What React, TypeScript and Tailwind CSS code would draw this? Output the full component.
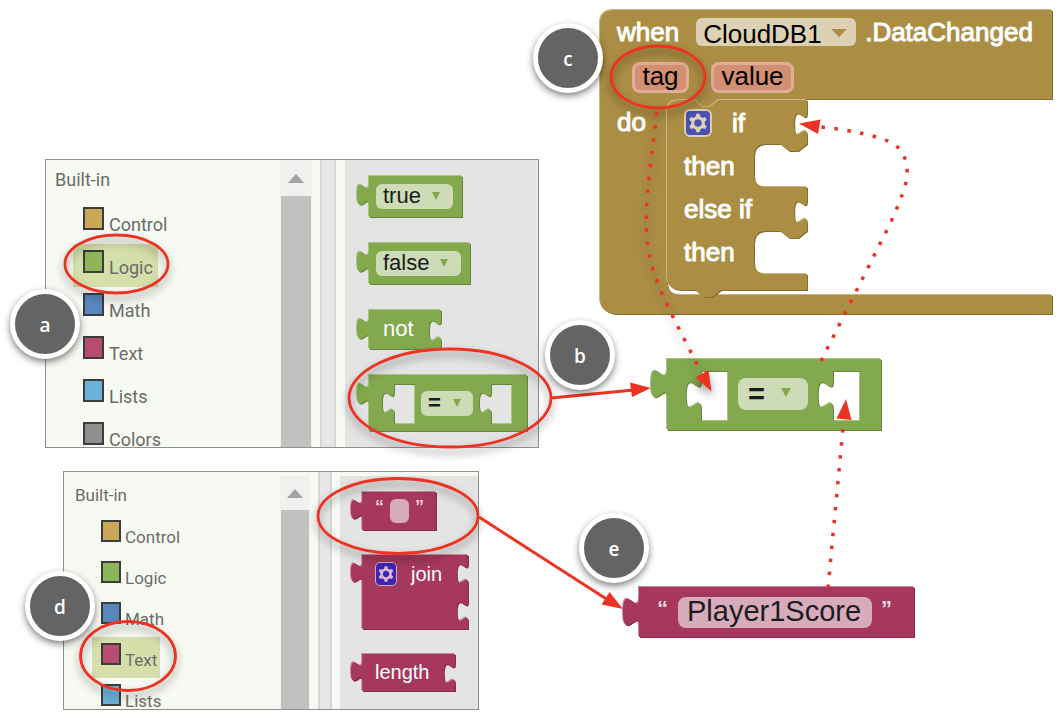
import type { ReactNode } from "react";

const GREEN = { base: "#83a94f", light: "#a9c482", dark: "#67863d" };
const PINK = { base: "#a5385c", light: "#c98aa1", dark: "#822d49" };
const GOLD = { base: "#ab8d44", light: "#c9b581", dark: "#846c35" };
type Tone = typeof GREEN;

// Puzzle tab drawn downwards, bulging to the left, at scale s.
const tab = (s: number) =>
  `v${5 * s}c0,${10 * s} ${-8 * s},${-8 * s} ${-8 * s},${7.5 * s}s${8 * s},${-2.5 * s} ${8 * s},${7.5 * s}`;

// The same tab traced upwards, used to close a clockwise outline.
const tabUp = (s: number) =>
  `c0,${-10 * s} ${-8 * s},${8 * s} ${-8 * s},${-7.5 * s}c0,${-15.5 * s} ${8 * s},${2.5 * s} ${8 * s},${-7.5 * s}`;

const body = (s: number, w: number, h: number, sockets: number[] = []) =>
  `M${8 * s},0H${w}` + sockets.map((y) => `V${y}${tab(s)}`).join("") + `V${h}H${8 * s}V${20 * s}${tabUp(s)}Z`;

const hole = (s: number, x: number, y: number, w: number, h: number) =>
  `M${x},${y}${tab(s)}V${y + h}H${x + w}V${y}Z`;

function Shape({ d, tone }: { d: string; tone: Tone }) {
  return (
    <svg className="absolute inset-0 h-full w-full overflow-visible" aria-hidden="true">
      <path d={d} fill={tone.light} fillRule="evenodd" transform="translate(-1,-1)" />
      <path d={d} fill={tone.dark} fillRule="evenodd" transform="translate(1,1)" />
      <path d={d} fill={tone.base} fillRule="evenodd" />
    </svg>
  );
}

function Block({ d, tone, className, children }: { d: string; tone: Tone; className: string; children?: ReactNode }) {
  return (
    <div className={`shrink-0 ${className}`}>
      <Shape d={d} tone={tone} />
      <div className="relative flex h-full w-full items-start">{children}</div>
    </div>
  );
}

function Dropdown({
  label,
  options,
  className,
  arrow,
  color,
}: {
  label: string;
  options: string[];
  className: string;
  arrow: string;
  color: string;
}) {
  return (
    <span className={`relative block ${className}`}>
      <select aria-label={label} className="block h-full w-full cursor-pointer appearance-none bg-transparent pb-[3px] pl-[7px] outline-none">
        {options.map((o) => (
          <option key={o}>{o}</option>
        ))}
      </select>
      <svg className={`pointer-events-none absolute ${arrow}`} viewBox="0 0 10 9" preserveAspectRatio="none" aria-hidden="true">
        <path d="M0,0H10L5,9Z" fill={color} />
      </svg>
    </span>
  );
}

function Gear({ className, stroke, fill }: { className: string; stroke: string; fill: string }) {
  return (
    <button aria-label="Edit block" className={`flex shrink-0 items-center justify-center ${className}`}>
      <svg viewBox="-11 -11 22 22" className="h-full w-full" aria-hidden="true">
        {[0, 60, 120, 180, 240, 300].map((a) => (
          <path key={a} d="M-2.4,-4.500L-1.500,-8.400H1.500L2.400,-4.500Z" fill={stroke} transform={`rotate(${a})`} />
        ))}
        <circle r="4.9" fill={fill} stroke={stroke} strokeWidth="2.8" />
      </svg>
    </button>
  );
}

type Category = { name: string; color: string };
const CATEGORIES: Category[] = [
  { name: "Control", color: "bg-[#c9a959]" },
  { name: "Logic", color: "bg-[#8fb45c]" },
  { name: "Math", color: "bg-[#5a86be]" },
  { name: "Text", color: "bg-[#b64c70]" },
  { name: "Lists", color: "bg-[#6bb2d8]" },
  { name: "Colors", color: "bg-[#8f8f8f]" },
];

function Categories({ items, active, row, swatch, label }: { items: Category[]; active: string; row: string; swatch: string; label: string }) {
  return (
    <ul>
      {items.map((c) => (
        <li key={c.name}>
          <button className={`flex items-start text-left ${row} ${c.name === active ? "bg-[#d5dfaa]" : ""}`}>
            <span className={`shrink-0 border-2 border-[#3a3d3c] ${swatch} ${c.color}`} />
            <span className={label}>{c.name}</span>
          </button>
        </li>
      ))}
    </ul>
  );
}

function Scrollbar({ className, head }: { className: string; head: string }) {
  return (
    <div className={`flex shrink-0 flex-col bg-[#f0f0f0] ${className}`}>
      <div className={`flex items-center justify-center ${head}`}>
        <svg className="h-[9px] w-4" viewBox="0 0 16 9" aria-hidden="true">
          <path d="M8,0L16,9H0Z" fill="#a3a3a3" />
        </svg>
      </div>
      <div className="mx-px flex-1 bg-[#c1c1c1]" />
    </div>
  );
}

function LogicPanel() {
  return (
    <section className="absolute left-[45px] top-[159px] flex h-[289px] w-[494px] overflow-hidden border border-[#8f8f8f] bg-[#f7faf3]">
      <div className="min-w-0 flex-1 font-[Roboto,sans-serif] text-[18px] leading-6 text-[#6b6b6b]">
        <h2 className="h-[41px] pl-[9px] pt-2">Built-in</h2>
        <div className="pl-[27px]">
          <Categories items={CATEGORIES} active="Logic" row="h-[43px] w-[85px] gap-[5px] pl-[10px] pt-[6px]" swatch="h-[23px] w-[21px]" label="pt-[6px]" />
        </div>
      </div>
      <Scrollbar className="w-8" head="h-9" />
      <div className="ml-2 w-4 shrink-0 border-x-2 border-[#d6d6d6] bg-[#e7e7e7]" />
      <div className="ml-[9px] flex w-[193px] shrink-0 flex-col gap-[26px] bg-[#e4e4e4] pl-3 pt-4 font-['Liberation_Sans',Arial,sans-serif] text-[22px] leading-6 text-[#1c1c1c]">
        <Block tone={GREEN} d={body(1.5, 105, 41)} className="relative h-[41px] w-[105px] pl-[19px] pt-2">
          <Dropdown label="true or false" options={["true", "false"]} className="h-[25px] w-[77px] rounded-md bg-[#cddbb6]" arrow="right-[13px] top-[8px] h-[8px] w-[8px]" color="#83a94f" />
        </Block>
        <Block tone={GREEN} d={body(1.5, 113, 41)} className="relative h-[41px] w-[113px] pl-[19px] pt-2">
          <Dropdown label="false or true" options={["false", "true"]} className="h-[25px] w-[85px] rounded-md bg-[#cddbb6]" arrow="right-[13px] top-[8px] h-[8px] w-[8px]" color="#83a94f" />
        </Block>
        <Block tone={GREEN} d={body(1.5, 84, 39, [2])} className="relative h-[39px] w-[84px] pl-[26px] pt-[7px]">
          <span className="text-white">not</span>
        </Block>
        <Block
          tone={GREEN}
          d={body(1.5, 170, 56) + hole(1.5, 37, 9, 21, 40) + hole(1.5, 134, 9, 21, 40)}
          className="relative h-14 w-[170px] pl-16 pt-4"
        >
          <Dropdown label="Comparison" options={["=", "≠"]} className="h-[25px] w-[52px] rounded-md bg-[#cddbb6] font-bold" arrow="right-[12px] top-[8px] h-[8px] w-[8px]" color="#83a94f" />
        </Block>
      </div>
    </section>
  );
}

function TextPanel() {
  return (
    <section className="absolute left-[63px] top-[471px] flex h-[239px] w-[416px] overflow-hidden border border-[#8f8f8f] bg-[#f7faf3]">
      <div className="min-w-0 flex-1 font-[Roboto,sans-serif] text-[17px] leading-6 text-[#6b6b6b]">
        <h2 className="h-[42px] pl-[11px] pt-[11px]">Built-in</h2>
        <div className="pl-7">
          <Categories items={CATEGORIES.slice(0, 5)} active="Text" row="h-[41px] w-[68px] gap-1 pl-[9px] pt-[6px]" swatch="h-[22px] w-5" label="pt-[5px]" />
        </div>
      </div>
      <Scrollbar className="mt-1 w-[30px]" head="h-[34px]" />
      <div className="ml-2 w-[14px] shrink-0 border-x-2 border-[#d6d6d6] bg-[#e7e7e7]" />
      <div className="ml-2 mt-1 flex w-[138px] shrink-0 flex-col gap-[25px] bg-[#e4e4e4] pl-[11px] pt-4 font-['Liberation_Sans',Arial,sans-serif] text-[20px] leading-6 text-white">
        <Block tone={PINK} d={body(1.4, 85, 38)} className="relative h-[38px] w-[85px] pl-6 pt-[7px]">
          <span className="flex gap-[6px] text-[18px] font-bold leading-4 text-[#edd3dc]">
            <span>“</span>
            <input aria-label="Empty text" className="h-6 w-[19px] rounded-md bg-[#d8abbc] outline-none" />
            <span>”</span>
          </span>
        </Block>
        <Block tone={PINK} d={body(1.4, 117, 74, [1, 39])} className="relative h-[74px] w-[117px] pl-6 pt-[7px]">
          <Gear className="h-6 w-[22px] rounded-[5px] border border-[#d8abbc] bg-[#3d24b3]" stroke="#d8b9d0" fill="#3d24b3" />
          <span className="pl-[14px]">join</span>
        </Block>
        <Block tone={PINK} d={body(1.4, 104, 37, [2])} className="relative h-[37px] w-[104px] pl-6 pt-[6px]">
          <span>length</span>
        </Block>
      </div>
    </section>
  );
}

const EVENT_SHAPE =
  "M14,0H452V89H121L112,96H103L94,89H80Q67,89 67,102V271Q67,285 82,285H452V304H14Q0,301 0,289V14Q0,0 14,0Z";

const mouth = (y: number) =>
  `V${y}L131,${y + 7}H122L113,${y}H99Q87,${y} 87,${y + 12}V${y + 31}Q87,${y + 43} 99,${y + 43}H140`;
const IF_SHAPE =
  `M13,0H27L36,7H43L52,0H140V4${tab(1.6)}${mouth(44)}V92${tab(1.6)}${mouth(131)}V190H54L45,197H37L28,190H15Q0,190 0,176V13Q0,0 13,0Z`;

const strong = "text-white [-webkit-text-stroke:1px_white]";

function EventBlock() {
  return (
    <section className="absolute left-[600px] top-[10px] h-[304px] w-[452px] font-['Liberation_Sans',Arial,sans-serif] text-[26px] leading-8 text-black">
      <Shape d={EVENT_SHAPE} tone={GOLD} />
      <div className="relative flex h-full flex-col">
        <div className="flex h-11 items-center pl-[17px]">
          <span className={strong}>when</span>
          <Dropdown label="Component" options={["CloudDB1"]} className="ml-[17px] h-7 w-40 rounded-md bg-[#ddd1b4]" arrow="right-[9px] top-[11px] h-2 w-4" color="#ab8d44" />
          <span className={`ml-[9px] ${strong}`}>.DataChanged</span>
        </div>
        <div className="flex h-[46px] items-center gap-[22px] pl-8">
          <button className="flex h-[31px] w-[57px] items-center justify-center rounded-lg border-[3px] border-[#e0ad98] bg-[#d28f71] pb-[2px]">tag</button>
          <button className="flex h-[31px] w-[83px] items-center justify-center rounded-lg border-[3px] border-[#e0ad98] bg-[#d28f71] pb-[2px]">value</button>
        </div>
        <div className="flex">
          <span className={`w-[67px] pl-[17px] pt-[6px] ${strong}`}>do</span>
          <div className="relative h-[190px] w-[140px]">
            <Shape d={IF_SHAPE} tone={GOLD} />
            <div className={`relative flex flex-col pl-[17px] pt-px ${strong}`}>
              <div className="flex h-[43px] items-center">
                <Gear className="h-7 w-7 rounded-md border-2 border-[#d9ccb0] bg-[#4a4fb0]" stroke="#ddd1b4" fill="#4a4fb0" />
                <span className="pl-5">if</span>
              </div>
              <span className="flex h-[43px] items-center">then</span>
              <span className="flex h-[43px] items-center">else if</span>
              <span className="flex h-[43px] items-center">then</span>
            </div>
          </div>
        </div>
      </div>
    </section>
  );
}

function Badge({ letter, className }: { letter: string; className: string }) {
  return (
    <span
      className={`absolute flex h-[70px] w-[70px] items-center justify-center rounded-full border-[5px] border-white bg-[#646464] pt-[2px] font-['Open_Sans',sans-serif] text-[19px] font-semibold leading-none text-white shadow-[0_3px_7px_rgba(0,0,0,0.5)] ${className}`}
    >
      {letter}
    </span>
  );
}

const RED = "#ec3323";

function Annotations() {
  return (
    <svg className="pointer-events-none absolute inset-0 h-full w-full overflow-visible" aria-hidden="true">
      <defs>
        <filter id="soft" x="-20%" y="-20%" width="140%" height="150%">
          <feDropShadow dx="0" dy="5" stdDeviation="4" floodColor="#000" floodOpacity="0.45" />
        </filter>
      </defs>
      <g fill="none" stroke={RED} strokeWidth="2.800" filter="url(#soft)">
        <ellipse cx="116.5" cy="264" rx="51.5" ry="29" />
        <ellipse cx="450" cy="398" rx="101" ry="49" />
        <ellipse cx="128" cy="656" rx="47.5" ry="34.5" />
        <ellipse cx="398" cy="516" rx="80" ry="37.5" />
        <ellipse cx="658" cy="77" rx="47" ry="31" />
      </g>
      <g stroke={RED} strokeWidth="3" fill="none">
        <path d="M551,398L634,390" />
        <path d="M479,517L608,600" />
      </g>
      <g fill={RED}>
        <path d="M651,388L630,382.500L632,397Z" />
        <path d="M623,609L609.500,592L601.500,604.500Z" />
        <path d="M799,123.500L820.500,119.500L818,134Z" />
        <path d="M846,399L836.500,418.500L851.500,420Z" />
      </g>
      <g fill="none" stroke={RED} strokeWidth="3.5" strokeDasharray="3.5 9.5">
        <path d="M821,361L890,224C905,190 908,180 907,168C906,158 902,150 894,144C880,136 850,130 821,127" />
        <path d="M828,588L843,428" />
      </g>
      <g filter="url(#soft)">
        <path d="M657,112C650,170 641,222 650,258C657,290 680,330 699,368" fill="none" stroke={RED} strokeWidth="3.5" strokeDasharray="3.5 9.5" />
        <path d="M711.500,391.500L695.500,377.500L708.500,370Z" fill={RED} />
      </g>
    </svg>
  );
}

export default function App() {
  return (
    <main className="relative min-h-screen w-full overflow-hidden bg-white">
      <LogicPanel />
      <TextPanel />
      <EventBlock />
      <Block
        tone={GREEN}
        d={body(2, 230, 71) + hole(1.9, 50, 12, 27, 50) + hole(1.9, 182, 12, 27, 50)}
        className="absolute left-[651px] top-[359px] h-[71px] w-[230px] pl-[87px] pt-[19px] font-['Liberation_Sans',Arial,sans-serif] text-[29px] leading-8 text-[#1c1c1c]"
      >
        <Dropdown label="Comparison" options={["=", "≠"]} className="h-8 w-[70px] rounded-lg bg-[#cddbb6] pl-[3px] font-bold" arrow="right-[17px] top-[10px] h-[9px] w-[10px]" color="#83a94f" />
      </Block>
      <Block
        tone={PINK}
        d={body(2, 291, 50)}
        className="absolute left-[623px] top-[587px] h-[50px] w-[291px] pl-[34px] pt-[10px] font-['Liberation_Sans',Arial,sans-serif] text-[29px] leading-8 text-[#1c1c1c]"
      >
        <span className="w-[21px] text-[22px] font-bold leading-6 text-[#f0dbe2]">“</span>
        <input aria-label="Text value" defaultValue="Player1Score" className="h-[31px] w-[194px] rounded-lg bg-[#d8abbc] px-[9px] pb-[3px] outline-none" />
        <span className="pl-[9px] text-[22px] font-bold leading-6 text-[#f0dbe2]">”</span>
      </Block>
      <Annotations />
      <Badge letter="a" className="left-[10px] top-[289px]" />
      <Badge letter="b" className="left-[545px] top-[320px]" />
      <Badge letter="c" className="left-[533px] top-[23px]" />
      <Badge letter="d" className="left-[25px] top-[571px]" />
      <Badge letter="e" className="left-[579px] top-[513px]" />
    </main>
  );
}
